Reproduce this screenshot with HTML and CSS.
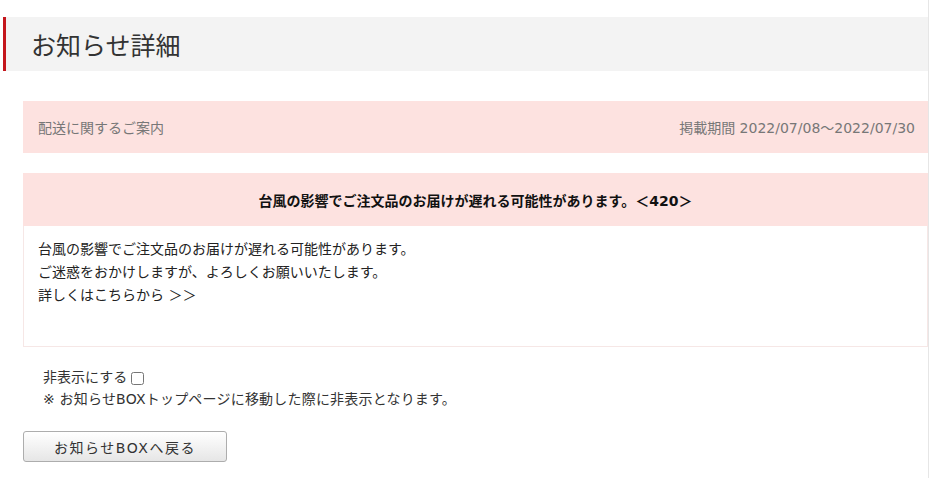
FILE: index.html
```html
<!DOCTYPE html>
<html lang="ja">
<head>
<meta charset="utf-8">
<title>お知らせ詳細</title>
<link rel="stylesheet" href="styles.css">
</head>
<body>
<div class="page">
  <h1 class="page-title">お知らせ詳細</h1>
  <div class="content">
    <div class="info-bar">
      <span class="category">配送に関するご案内</span>
      <span class="period">掲載期間 2022/07/08～2022/07/30</span>
    </div>
    <div class="notice">
      <div class="notice-title">台風の影響でご注文品のお届けが遅れる可能性があります。＜420＞</div>
      <div class="notice-body">
        <p>台風の影響でご注文品のお届けが遅れる可能性があります。</p>
        <p>ご迷惑をおかけしますが、よろしくお願いいたします。</p>
        <p>詳しくはこちらから ＞＞</p>
      </div>
    </div>
    <div class="hide-option">
      <label class="hide-label">非表示にする<input type="checkbox" class="hide-check"></label>
      <p class="hide-note">※ お知らせBOXトップページに移動した際に非表示となります。</p>
    </div>
    <button class="back-btn" type="button">お知らせBOXへ戻る</button>
  </div>
</div>
</body>
</html>
```

FILE: styles.css
```css
html, body {
  margin: 0;
  padding: 0;
  background: #fff;
}
body {
  font-family: "DejaVu Sans", "Noto Sans CJK JP", sans-serif;
  font-size: 14px;
  color: #333;
}
.page {
  width: 929px;
  min-height: 478px;
  box-sizing: border-box;
  padding-top: 17px;
  border-right: 1px solid #e6e6e6;
}
.page-title {
  margin: 0 0 0 3px;
  height: 54px;
  box-sizing: border-box;
  border-left: 3px solid #c4161c;
  background: #f3f3f3;
  padding-left: 25px;
  display: flex;
  align-items: center;
  font-family: "Noto Sans CJK JP", sans-serif;
  font-size: 25px;
  font-weight: normal;
  color: #333;
}
.content {
  margin-top: 30px;
  padding-left: 23px;
}
.info-bar {
  height: 52px;
  background: #fde2e0;
  display: flex;
  align-items: center;
  justify-content: space-between;
  padding: 0 13px 0 15px;
  color: #777;
  font-size: 14px;
}
.notice {
  margin-top: 20px;
}
.notice-title {
  height: 53px;
  background: #fde2e0;
  display: flex;
  align-items: center;
  justify-content: center;
  font-weight: bold;
  color: #111;
  font-size: 14px;
}
.notice-body {
  height: 121px;
  box-sizing: border-box;
  border: 1px solid #f6e7e6;
  border-top: none;
  padding: 12px 14px;
  color: #222;
  line-height: 23px;
}
.notice-body p {
  margin: 0;
}
.hide-option {
  margin-top: 19px;
  padding-left: 20px;
  line-height: 22px;
  color: #333;
}
.hide-label {
  display: inline-flex;
  align-items: center;
}
.hide-check {
  width: 13px;
  height: 13px;
  margin: 2px 0 0 4px;
}
.hide-note {
  margin: 0;
  letter-spacing: 0.2px;
}
.back-btn {
  margin-top: 21px;
  width: 204px;
  height: 31px;
  border: 1px solid #adadad;
  border-radius: 3px;
  background: linear-gradient(#ffffff, #e6e6e6);
  font-family: "DejaVu Sans", "Noto Sans CJK JP", sans-serif;
  font-size: 14px;
  color: #333;
  letter-spacing: 1.5px;
  cursor: pointer;
}
```
